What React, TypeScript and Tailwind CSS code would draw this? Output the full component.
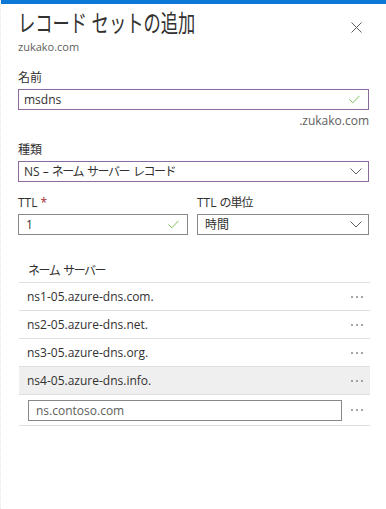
import React from "react";

const FONT: React.CSSProperties = {
  fontFamily: '"Open Sans", "Noto Sans CJK JP", sans-serif',
};

const SERVERS = [
  "ns1-05.azure-dns.com.",
  "ns2-05.azure-dns.net.",
  "ns3-05.azure-dns.org.",
  "ns4-05.azure-dns.info.",
];

function Check() {
  return (
    <svg width="11" height="9" viewBox="0 0 11 9" fill="none">
      <polyline points="0.5,4.5 3.8,7.8 10.5,0.8" stroke="#7fbf5a" strokeWidth="1" />
    </svg>
  );
}

function Chevron() {
  return (
    <svg width="12" height="7" viewBox="0 0 12 7" fill="none">
      <polyline points="0.5,0.5 6,6 11.5,0.5" stroke="#605e5c" strokeWidth="1" />
    </svg>
  );
}

function Dots() {
  return (
    <div className="flex items-center gap-[3px]">
      <span className="w-[2px] h-[2px] rounded-full bg-[#8a8886]" />
      <span className="w-[2px] h-[2px] rounded-full bg-[#8a8886]" />
      <span className="w-[2px] h-[2px] rounded-full bg-[#8a8886]" />
    </div>
  );
}

// kana words set tight, like the narrow UI font in the original
function Kana({ words }: { words: string[] }) {
  return (
    <span className="inline-flex gap-[4px]">
      {words.map((w) => (
        <span key={w} className="tracking-[-1.5px]">
          {w}
        </span>
      ))}
    </span>
  );
}

export default function App() {
  return (
    <div className="w-[386px] h-[509px] bg-white text-[#323130] overflow-hidden border-l border-dotted border-[#e6e6e6]" style={FONT}>
      <div className="h-[4px] bg-[#0a78d4]" />
      <div className="px-[17px]">
        <div className="flex items-start justify-between pt-[5px]">
          <h1 className="text-[24px] leading-[28px] font-normal text-[#323130] origin-left scale-x-[0.72] whitespace-nowrap">
            レコード セットの追加
          </h1>
          <button className="mt-[13px] mr-[7px]" aria-label="閉じる">
            <svg width="11" height="11" viewBox="0 0 11 11" fill="none">
              <path d="M0.5 0.5 L10.5 10.5 M10.5 0.5 L0.5 10.5" stroke="#605e5c" strokeWidth="1" />
            </svg>
          </button>
        </div>
        <div className="mt-[3px] text-[11px] leading-[14px] text-[#605e5c]">zukako.com</div>

        <div className="mt-[16px] text-[12px] leading-[16px]">名前</div>
        <div className="mt-[3px] h-[21px] border border-[#8b6a9f] flex items-center justify-between pl-[5px] pr-[8px] text-[12px]">
          <span>msdns</span>
          <Check />
        </div>
        <div className="mt-[3px] text-right text-[12px] leading-[16px] text-[#605e5c]">.zukako.com</div>

        <div className="mt-[13px] text-[12px] leading-[16px]">種類</div>
        <div className="mt-[3px] h-[21px] border border-[#8b6a9f] flex items-center justify-between pl-[5px] pr-[6px] text-[12px]">
          <span>
            NS – <Kana words={["ネーム", "サーバー", "レコード"]} />
          </span>
          <Chevron />
        </div>

        <div className="mt-[13px] grid grid-cols-[170px_1fr] gap-x-[9px]">
          <div>
            <div className="text-[12px] leading-[16px]">
              TTL <span className="text-[#a4262c]">*</span>
            </div>
            <div className="mt-[3px] h-[21px] border border-[#8a8886] flex items-center justify-between pl-[7px] pr-[8px] text-[12px]">
              <span>1</span>
              <Check />
            </div>
          </div>
          <div>
            <div className="text-[12px] leading-[16px]">
              TTL <span className="tracking-[-1px]">の単位</span>
            </div>
            <div className="mt-[3px] h-[21px] border border-[#8a8886] flex items-center justify-between pl-[7px] pr-[6px] text-[12px]">
              <span>時間</span>
              <Chevron />
            </div>
          </div>
        </div>

        <div className="mt-[28px] ml-[1px] mr-[-1px]">
          <div className="pl-[9px] pb-[3px] text-[12px] leading-[16px] border-b border-[#e1dfdd]">
            <Kana words={["ネーム", "サーバー"]} />
          </div>
          {SERVERS.map((name, i) => (
            <div
              key={name}
              className={
                "h-[28px] flex items-center justify-between pl-[8px] pr-[7px] text-[12px] border-b border-[#e1dfdd] " +
                (i === 3 ? "bg-[#efefef]" : "")
              }
            >
              <span>{name}</span>
              <Dots />
            </div>
          ))}
          <div className="h-[31px] flex items-center justify-between pl-[9px] pr-[7px] border-b border-[#e1dfdd]">
            <input
              className="w-[314px] h-[21px] border border-[#8a8886] px-[7px] text-[12px] outline-none placeholder:text-[#605e5c]"
              placeholder="ns.contoso.com"
              style={FONT}
            />
            <Dots />
          </div>
        </div>
      </div>
    </div>
  );
}
